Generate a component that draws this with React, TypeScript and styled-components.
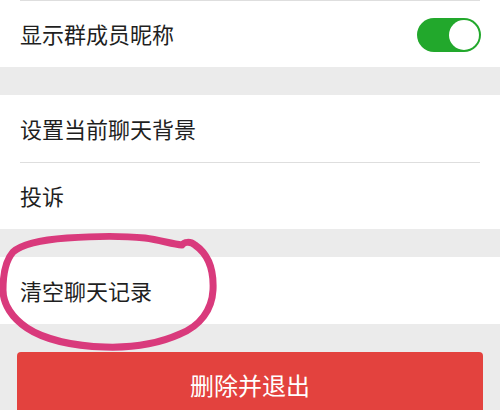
import styled, { createGlobalStyle } from 'styled-components'

const GlobalStyle = createGlobalStyle`
  html, body {
    margin: 0;
    padding: 0;
    background: #ebebeb;
    font-family: "Noto Sans CJK SC", "Noto Sans", sans-serif;
  }
`

type RowProps = {
  label: string
  divider?: boolean
  toggle?: boolean
}

export default function App() {
  return (
    <>
      <GlobalStyle />
      <StyledPage>
        <StyledGroup>
          <SettingRow label="显示群成员昵称" divider toggle />
        </StyledGroup>
        <StyledGroup>
          <SettingRow label="设置当前聊天背景" />
          <SettingRow label="投诉" divider />
        </StyledGroup>
        <StyledGroup>
          <SettingRow label="清空聊天记录" />
        </StyledGroup>
        <StyledDangerButton>删除并退出</StyledDangerButton>
        <Annotation />
      </StyledPage>
    </>
  )
}

const SettingRow = ({ label, divider, toggle }: RowProps) => {
  return (
    <StyledRow $divider={divider}>
      <StyledLabel>{label}</StyledLabel>
      {toggle && (
        <StyledSwitch>
          <StyledKnob />
        </StyledSwitch>
      )}
    </StyledRow>
  )
}

// hand-drawn marker circle around the "clear history" row
const Annotation = () => {
  return (
    <StyledMarker viewBox="0 0 500 410" width="500" height="410">
      <path
        d="M13 252 C 22 244, 40 240, 67 238 C 95 236, 125 236, 145 238 C 160 240, 172 244, 182 245 C 184 242, 190 241, 195 245 C 208 254, 214 270, 213 290 C 212 310, 200 326, 180 334 C 160 343, 135 348, 105 347 C 75 346, 45 340, 27 328 C 12 318, 3 304, 3 290 C 3 275, 6 260, 13 252 Z"
        fill="none"
        stroke="#d93a7c"
        strokeWidth="7"
        strokeLinecap="round"
        strokeLinejoin="round"
      />
    </StyledMarker>
  )
}

const StyledPage = styled.div`
  position: relative;
  width: 500px;
  height: 410px;
  overflow: hidden;
  display: flex;
  flex-direction: column;
  gap: 28px;
`

const StyledGroup = styled.div`
  background: #ffffff;
  display: flex;
  flex-direction: column;
`

const StyledRow = styled.div<{ $divider?: boolean }>`
  position: relative;
  height: 67px;
  display: flex;
  align-items: center;
  justify-content: space-between;
  padding: 0 19px 2px 20px;
  box-sizing: border-box;
  &::before {
    content: '';
    display: ${({ $divider }) => ($divider ? 'block' : 'none')};
    position: absolute;
    top: 0;
    left: 20px;
    right: 20px;
    height: 1px;
    background: #dedede;
  }
`

const StyledLabel = styled.span`
  font-size: 22px;
  color: #1f1f1f;
  line-height: 1;
`

const StyledSwitch = styled.div`
  width: 64px;
  height: 34px;
  margin-top: 4px;
  border-radius: 17px;
  background: #22a82c;
  display: flex;
  align-items: center;
  justify-content: flex-end;
  padding: 0 2px;
  box-sizing: border-box;
`

const StyledKnob = styled.div`
  width: 30px;
  height: 30px;
  border-radius: 50%;
  background: #ffffff;
`

const StyledDangerButton = styled.div`
  margin: 0 17px;
  height: 64px;
  flex-shrink: 0;
  border-radius: 4px;
  background: #e3423e;
  color: #ffffff;
  font-size: 24px;
  display: flex;
  align-items: center;
  justify-content: center;
`

const StyledMarker = styled.svg`
  position: absolute;
  top: 0;
  left: 0;
  pointer-events: none;
`
